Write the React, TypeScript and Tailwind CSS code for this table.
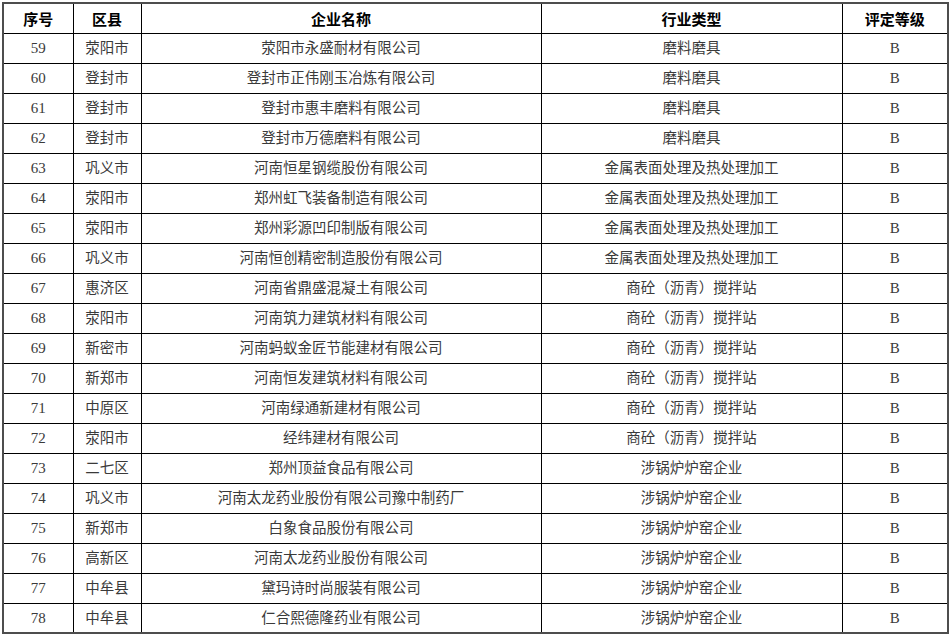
import React from 'react';

type Row = [number, string, string, string];

const rows: Row[] = [
  [59, '荥阳市', '荥阳市永盛耐材有限公司', '磨料磨具'],
  [60, '登封市', '登封市正伟刚玉冶炼有限公司', '磨料磨具'],
  [61, '登封市', '登封市惠丰磨料有限公司', '磨料磨具'],
  [62, '登封市', '登封市万德磨料有限公司', '磨料磨具'],
  [63, '巩义市', '河南恒星钢缆股份有限公司', '金属表面处理及热处理加工'],
  [64, '荥阳市', '郑州虹飞装备制造有限公司', '金属表面处理及热处理加工'],
  [65, '荥阳市', '郑州彩源凹印制版有限公司', '金属表面处理及热处理加工'],
  [66, '巩义市', '河南恒创精密制造股份有限公司', '金属表面处理及热处理加工'],
  [67, '惠济区', '河南省鼎盛混凝土有限公司', '商砼（沥青）搅拌站'],
  [68, '荥阳市', '河南筑力建筑材料有限公司', '商砼（沥青）搅拌站'],
  [69, '新密市', '河南蚂蚁金匠节能建材有限公司', '商砼（沥青）搅拌站'],
  [70, '新郑市', '河南恒发建筑材料有限公司', '商砼（沥青）搅拌站'],
  [71, '中原区', '河南绿通新建材有限公司', '商砼（沥青）搅拌站'],
  [72, '荥阳市', '经纬建材有限公司', '商砼（沥青）搅拌站'],
  [73, '二七区', '郑州顶益食品有限公司', '涉锅炉炉窑企业'],
  [74, '巩义市', '河南太龙药业股份有限公司豫中制药厂', '涉锅炉炉窑企业'],
  [75, '新郑市', '白象食品股份有限公司', '涉锅炉炉窑企业'],
  [76, '高新区', '河南太龙药业股份有限公司', '涉锅炉炉窑企业'],
  [77, '中牟县', '黛玛诗时尚服装有限公司', '涉锅炉炉窑企业'],
  [78, '中牟县', '仁合熙德隆药业有限公司', '涉锅炉炉窑企业'],
];

const headers = ['序号', '区县', '企业名称', '行业类型', '评定等级'];

export default function App() {
  return (
    <div className="w-[950px] h-[636px] bg-white pl-[2px] pt-[2px] font-['Liberation_Serif','Noto_Sans_CJK_SC',serif]">
      <table className="table-fixed border-collapse border-2 border-[#4d4d4d] w-[945px]">
        <colgroup>
          <col className="w-[70px]" />
          <col className="w-[68px]" />
          <col className="w-[400px]" />
          <col className="w-[301px]" />
          <col className="w-[106px]" />
        </colgroup>
        <thead>
          <tr className="h-[30px]">
            {headers.map((h) => (
              <th
                key={h}
                className="border border-black p-0 text-center text-[15px] font-bold text-black font-['Noto_Sans_CJK_SC',sans-serif] leading-none"
              >
                {h}
              </th>
            ))}
          </tr>
        </thead>
        <tbody>
          {rows.map(([no, area, name, type]) => (
            <tr key={no} className="h-[30px] text-[#3a3a3a]">
              <td className="border border-black p-0 pt-[1px] text-center text-[15px] leading-none">{no}</td>
              <td className="border border-black p-0 pt-[1px] text-center text-[14.5px] leading-none">{area}</td>
              <td className="border border-black p-0 pt-[1px] text-center text-[14.5px] leading-none">{name}</td>
              <td className="border border-black p-0 pt-[1px] text-center text-[14.5px] leading-none">{type}</td>
              <td className="border border-black p-0 pt-[1px] text-center text-[15px] leading-none">B</td>
            </tr>
          ))}
        </tbody>
      </table>
    </div>
  );
}
